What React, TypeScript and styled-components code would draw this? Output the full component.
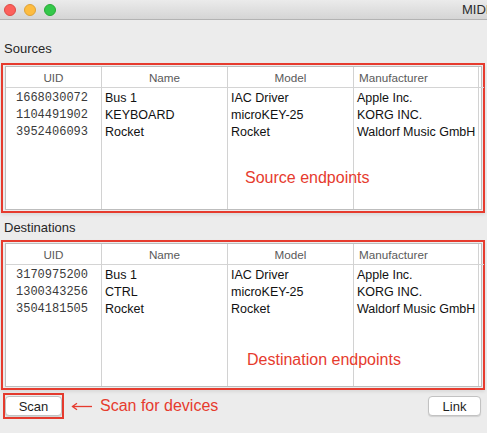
import React from "react";
import styled, { createGlobalStyle } from "styled-components";

type Endpoint = {
  uid: string;
  name: string;
  model: string;
  manufacturer: string;
};

type Column = {
  key: keyof Endpoint;
  title: string;
  width: number;
  headerAlign: "center" | "left";
};

const sources: Endpoint[] = [
  { uid: "1668030072", name: "Bus 1", model: "IAC Driver", manufacturer: "Apple Inc." },
  { uid: "1104491902", name: "KEYBOARD", model: "microKEY-25", manufacturer: "KORG INC." },
  { uid: "3952406093", name: "Rocket", model: "Rocket", manufacturer: "Waldorf Music GmbH" },
];

const destinations: Endpoint[] = [
  { uid: "3170975200", name: "Bus 1", model: "IAC Driver", manufacturer: "Apple Inc." },
  { uid: "1300343256", name: "CTRL", model: "microKEY-25", manufacturer: "KORG INC." },
  { uid: "3504181505", name: "Rocket", model: "Rocket", manufacturer: "Waldorf Music GmbH" },
];

const columns: Column[] = [
  { key: "uid", title: "UID", width: 96, headerAlign: "center" },
  { key: "name", title: "Name", width: 126, headerAlign: "center" },
  { key: "model", title: "Model", width: 126, headerAlign: "center" },
  { key: "manufacturer", title: "Manufacturer", width: 125, headerAlign: "left" },
];

const RED = "#e63b2e";

const GlobalStyle = createGlobalStyle`
  html, body {
    margin: 0;
    padding: 0;
    background: #ececec;
    height: 433px;
    overflow: hidden;
  }
  body {
    font-family: "Liberation Sans", Arial, sans-serif;
    color: #222;
  }
`;

const EndpointTable: React.FC<{ rows: Endpoint[] }> = ({ rows }) => (
  <Table>
    {columns.map((col) => (
      <TableColumn key={col.key} $width={col.width}>
        <HeaderCell $align={col.headerAlign}>{col.title}</HeaderCell>
        <ColumnBody>
          {rows.map((row) => (
            <Cell key={row.uid} $mono={col.key === "uid"}>
              {row[col.key]}
            </Cell>
          ))}
        </ColumnBody>
      </TableColumn>
    ))}
    <FillerColumn>
      <HeaderCell $align="left" />
    </FillerColumn>
  </Table>
);

const ArrowLeft = () => (
  <svg width="22" height="9" viewBox="0 0 22 9">
    <line x1="1.5" y1="4.5" x2="21" y2="4.5" stroke={RED} strokeWidth="1.3" />
    <polyline points="6,1.2 1.5,4.5 6,7.8" fill="none" stroke={RED} strokeWidth="1.3" />
  </svg>
);

export default function App() {
  return (
    <>
      <GlobalStyle />
      <Window>
        <TitleBar>
          <Lights>
            <Light $color="#fc605c" $border="#de4a44" />
            <Light $color="#fdbc40" $border="#dea236" />
            <Light $color="#34c84a" $border="#27aa35" />
          </Lights>
          <Title>MIDI</Title>
        </TitleBar>

        <Main>
          <SectionLabel $top={21}>Sources</SectionLabel>
          <RedBox $top={6}>
            <EndpointTable rows={sources} />
            <Annotation $left={242} $top={104}>Source endpoints</Annotation>
          </RedBox>

          <SectionLabel $top={7}>Destinations</SectionLabel>
          <RedBox $top={4}>
            <EndpointTable rows={destinations} />
            <Annotation $left={244} $top={109}>Destination endpoints</Annotation>
          </RedBox>

          <Footer>
            <ScanBox>
              <PushButton $width={57}>Scan</PushButton>
            </ScanBox>
            <ArrowWrap>
              <ArrowLeft />
            </ArrowWrap>
            <FooterNote>Scan for devices</FooterNote>
            <LinkButton $width={53}>Link</LinkButton>
          </Footer>
        </Main>
      </Window>
    </>
  );
}

const Window = styled.div`
  width: 487px;
  height: 433px;
  display: flex;
  flex-direction: column;
  overflow: hidden;
`;

const TitleBar = styled.div`
  height: 19px;
  flex-shrink: 0;
  display: flex;
  align-items: center;
  padding-left: 4px;
  background: linear-gradient(#ebebeb, #d5d5d5);
  border-bottom: 1px solid #b3b3b3;
  overflow: hidden;
`;

const Lights = styled.div`
  display: flex;
  gap: 8px;
`;

const Light = styled.span<{ $color: string; $border: string }>`
  width: 12px;
  height: 12px;
  box-sizing: border-box;
  border-radius: 50%;
  background: ${(p) => p.$color};
  border: 0.5px solid ${(p) => p.$border};
`;

const Title = styled.span`
  margin-left: 406px;
  white-space: nowrap;
  flex-shrink: 0;
  font-size: 13px;
  color: #2b2b2b;
`;

const Main = styled.div`
  display: flex;
  flex-direction: column;
`;

const SectionLabel = styled.div<{ $top: number }>`
  margin-top: ${(p) => p.$top}px;
  padding-left: 4px;
  height: 16px;
  line-height: 16px;
  font-size: 13px;
  color: #262626;
`;

const RedBox = styled.div<{ $top: number }>`
  position: relative;
  margin: ${(p) => p.$top}px 2px 0 1px;
  border: 2px solid ${RED};
  padding: 1px 1px 1px 2px;
  box-shadow: 0 2px 3px rgba(0, 0, 0, 0.08);
`;

const Table = styled.div`
  display: flex;
  height: 144px;
  box-sizing: border-box;
  border: 1px solid #bdbdbd;
  background: #fff;
`;

const TableColumn = styled.div<{ $width: number }>`
  width: ${(p) => p.$width}px;
  flex-shrink: 0;
  box-sizing: border-box;
  border-right: 1px solid #d2d2d2;
  display: flex;
  flex-direction: column;
`;

const FillerColumn = styled.div`
  flex: 1;
  display: flex;
  flex-direction: column;
`;

const HeaderCell = styled.div<{ $align: "center" | "left" }>`
  height: 20px;
  line-height: 22px;
  flex-shrink: 0;
  border-bottom: 1px solid #d4d4d4;
  font-size: 11.7px;
  color: #5a5a5a;
  text-align: ${(p) => p.$align};
  padding-left: ${(p) => (p.$align === "left" ? "5px" : "0")};
  white-space: nowrap;
  overflow: hidden;
`;

const ColumnBody = styled.div`
  padding-top: 2px;
  display: flex;
  flex-direction: column;
`;

const Cell = styled.div<{ $mono: boolean }>`
  height: 17px;
  line-height: 17px;
  white-space: nowrap;
  overflow: hidden;
  font-family: ${(p) =>
    p.$mono ? `"Liberation Mono", "Courier New", monospace` : `"Liberation Sans", Arial, sans-serif`};
  font-size: ${(p) => (p.$mono ? "12px" : "12.5px")};
  color: ${(p) => (p.$mono ? "#3a3a3a" : "#111")};
  text-align: ${(p) => (p.$mono ? "right" : "left")};
  padding: ${(p) => (p.$mono ? "0 13px 0 0" : "0 0 0 3px")};
`;

const Annotation = styled.span<{ $left: number; $top: number }>`
  position: absolute;
  left: ${(p) => p.$left}px;
  top: ${(p) => p.$top}px;
  font-size: 16px;
  line-height: 18px;
  color: ${RED};
  white-space: nowrap;
`;

const Footer = styled.div`
  display: flex;
  align-items: center;
  margin-top: 3px;
  padding-left: 3px;
`;

const ScanBox = styled.div`
  border: 2px solid ${RED};
  padding: 1px 0;
  display: flex;
`;

const PushButton = styled.button<{ $width: number }>`
  width: ${(p) => p.$width}px;
  height: 20px;
  margin: 0;
  padding: 0;
  box-sizing: border-box;
  border: 1px solid #c2c2c2;
  border-radius: 4px;
  background: #fff;
  box-shadow: 0 1px 1px rgba(0, 0, 0, 0.12);
  font-family: "Liberation Sans", Arial, sans-serif;
  font-size: 13px;
  color: #1e1e1e;
`;

const LinkButton = styled(PushButton)`
  margin-left: auto;
  margin-right: 6px;
`;

const ArrowWrap = styled.span`
  display: flex;
  margin-left: 7px;
`;

const FooterNote = styled.span`
  margin-left: 7px;
  font-size: 16px;
  color: ${RED};
`;
